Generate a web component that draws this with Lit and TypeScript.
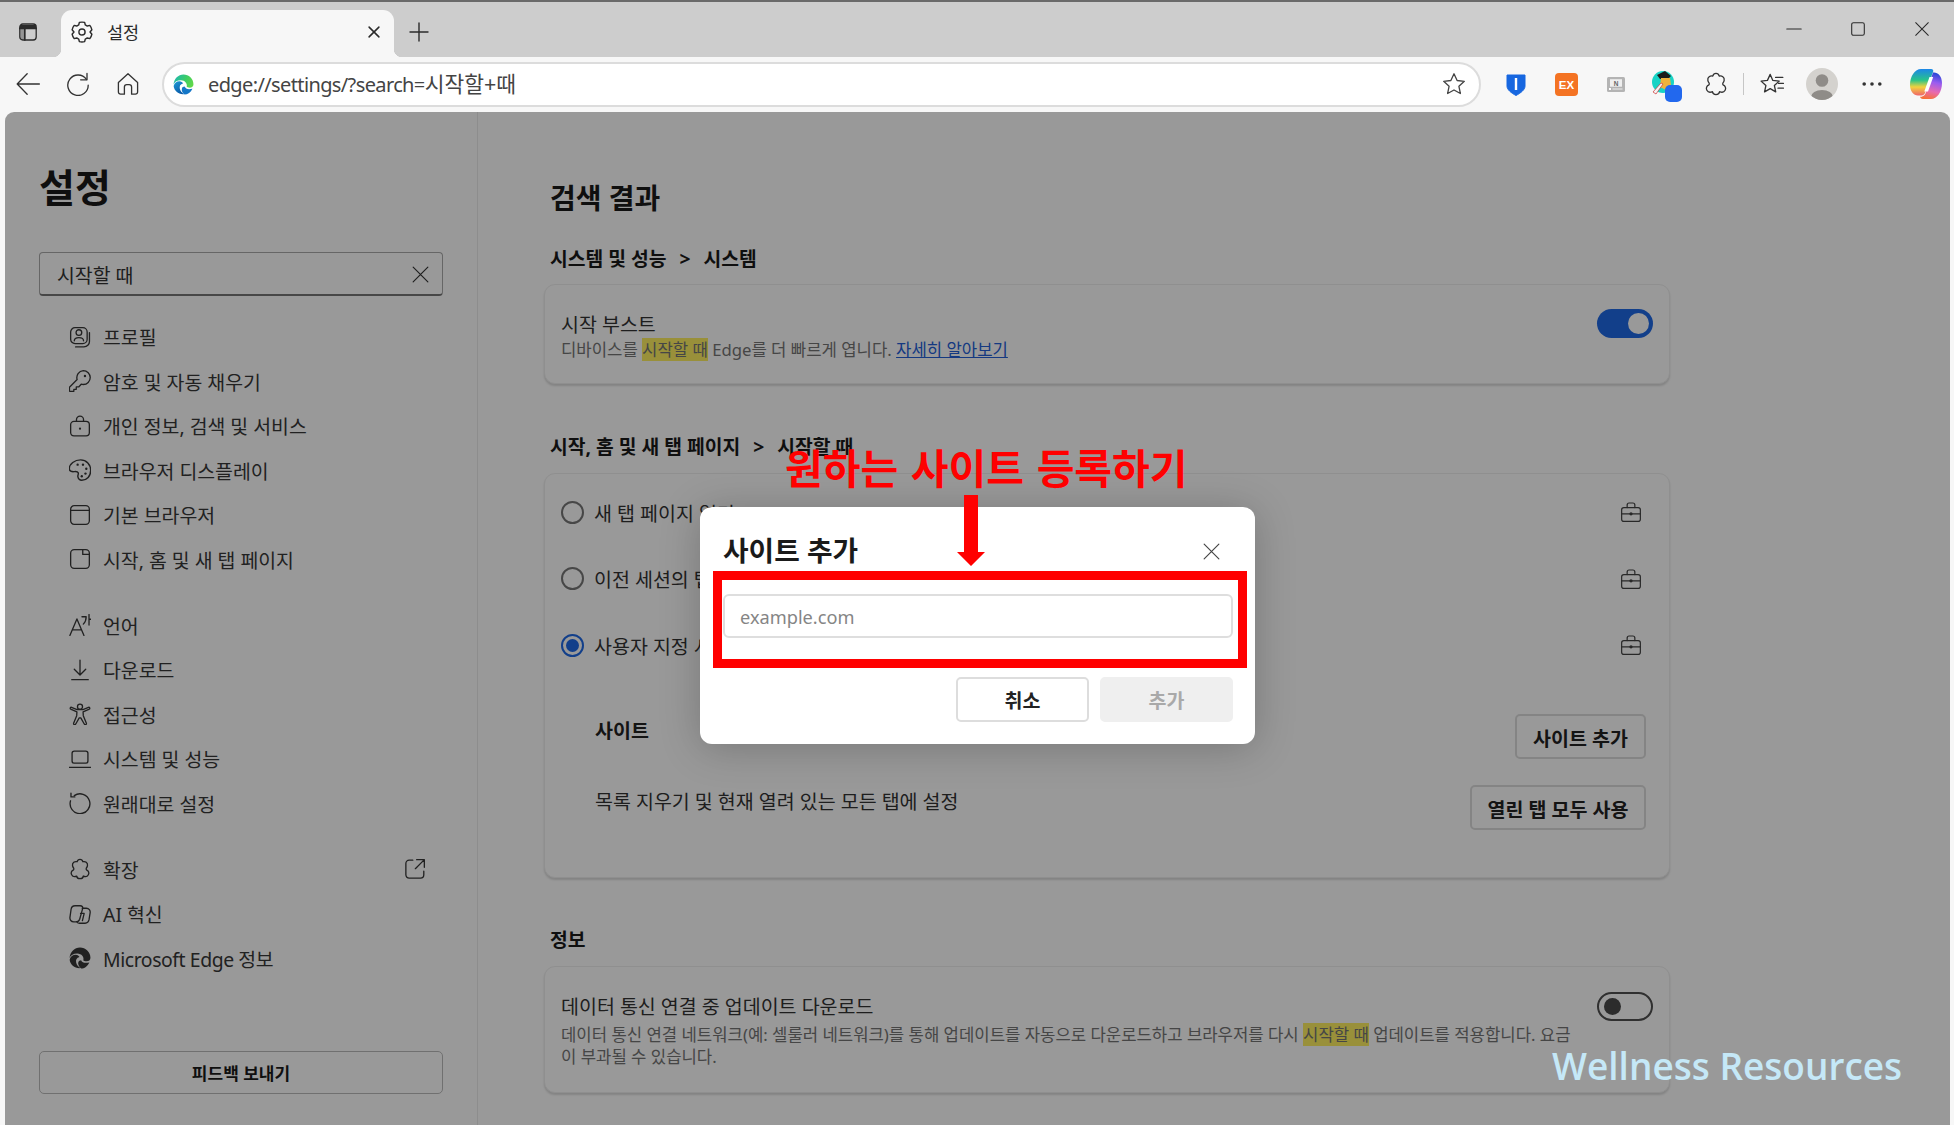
import { LitElement, html, svg, css } from 'lit'
import { customElement } from 'lit/decorators.js'

const EDGE_TOP = 'M.5 10C1 4.500 5 .5 10 .5s9.500 4 9.500 9.200c0 2-1.500 3.300-3.500 3.300-1.500 0-2.700-.5-3-1 1-2.500-1.500-6-5.500-6C4 6 1.500 7.500.5 10z'
const EDGE_LEFT = 'M.6 11.500c.6-3 3-4.500 5.500-4.500 1.700 0 3 1 3.400 2-2.500.5-3.500 2.500-3 5 .4 2 2 4 4 5.200C5.500 19.800 1 16 .6 11.500z'
const EDGE_RIGHT = 'M11 12c1 2.200 3.500 3 7.500 2-1.500 3.500-4.500 5.500-7.500 5.500-1.700-1.300-3.200-3.500-2.500-5.800.3-.9 1.300-1.700 2.500-1.700z'
const PUZZLE = 'M7.300 3.400C7.700 2 8.700 1.200 10 1.200s2.300.8 2.700 2.200c2-.6 4.600.8 4.100 3.600-.1.8-.5 1.600-1.100 2.300-.2.6-.1 1.100.2 1.500 1.900.8 2.700 2.600 1.700 4.400-.9 1.600-2.900 2-4.600 1.200-.2 1.500-1.500 2.400-3 2.400s-2.800-.9-3-2.400c-1.700.8-3.700.4-4.600-1.200-1-1.800-.2-3.600 1.700-4.400.3-.4.4-.9.200-1.500-.6-.7-1-1.500-1.100-2.300-.5-2.800 2.100-4.200 4.100-3.600z'

const ICONS: Record<string, unknown> = {
  profile: svg`<rect x="1.500" y="1.500" width="15" height="14.500" rx="4"/><circle cx="9" cy="6" r="2.600"/><path d="M4.800 13.500c0-2.200 1.800-3 4.200-3s4.200.8 4.200 3"/><path d="M18.600 6v8a5 5 0 0 1-5 5H6"/>`,
  key: svg`<path d="M13 .6a6.300 6.300 0 0 1 0 12.600c-.7 0-1.300-.1-1.900-.3L8.800 15.400H6.600v2.200H4.400v1.800H1.200a.8.8 0 0 1-.8-.8v-2.900l7-7A6.300 6.300 0 0 1 13 .6z"/><circle cx="14.500" cy="5.400" r="1.100" fill="currentColor" stroke="none"/>`,
  lock: svg`<rect x="1.500" y="5.800" width="17" height="13.200" rx="3"/><path d="M6.800 5.800V4.200a3.200 3.200 0 0 1 6.400 0v1.600"/><circle cx="10" cy="12.400" r="1" fill="currentColor" stroke="none"/>`,
  palette: svg`<g transform="translate(10 10) scale(1.080) translate(-10 -10)"><path d="M10.500 1.500C5.500 1.500 1 5 1 8.800c0 2.200 2 2.700 3.700 2.600 1.700-.1 3.300-.4 3.800 1 .4 1.200-.5 2-.3 3.200.3 1.900 1.500 3 3.300 3 4.300 0 7.500-3.500 7.500-8.300s-3.500-8.800-8.500-8.800z"/><g fill="currentColor" stroke="none"><circle cx="8" cy="5.500" r="1"/><circle cx="12.500" cy="5.500" r="1"/><circle cx="15.300" cy="9" r="1"/><circle cx="14.600" cy="13" r="1"/><circle cx="11.500" cy="15.300" r="1"/></g></g>`,
  browser: svg`<rect x="1.500" y="1.500" width="17" height="17" rx="3.200"/><path d="M1.500 5.800h17"/>`,
  startpage: svg`<path d="M4.700 1.500h7.800v4.300h6v9.500a3.200 3.200 0 0 1-3.200 3.200H4.700a3.200 3.200 0 0 1-3.200-3.200V4.700a3.200 3.200 0 0 1 3.200-3.200z"/><path d="M12.500 1.500h2.800a3.200 3.200 0 0 1 3.200 3.200v1.100"/>`,
  language: svg`<path d="M.8 19.500L7.200 4.500l6.400 15M3 14.500h8.500"/><path d="M11.800 2.500h3.800c0 2.800-.8 5-2.600 6.700M18.200.5v9.500M18.200 4.800h1.600"/>`,
  download: svg`<path d="M10 1v13.500M4.800 9.300l5.200 5.200 5.200-5.200M2.500 18.800h15"/>`,
  access: svg`<circle cx="10" cy="3.400" r="2.300"/><path d="M1.500 5.500l5.700 2.600-.2 3.400-2.800 7c-.3 1 1.200 1.700 1.800.8l3.300-5.800h1.400l3.300 5.800c.6.9 2.100.2 1.800-.8L13 11.500l-.2-3.400 5.700-2.600c.8-.5.200-2-.8-1.600l-5 2.100H7.300l-5-2.100c-1-.4-1.600 1.100-.8 1.600z"/>`,
  laptop: svg`<rect x="2.800" y="2.800" width="14.400" height="11" rx="2"/><path d="M0 17.600h20"/>`,
  reset: svg`<path d="M4.800 3.300A9 9 0 1 1 1.400 8"/><path d="M1.800 1v3.500h3.500"/>`,
  puzzle: svg`<path d=${PUZZLE}/>`,
  ai: svg`<path d="M5.500 2.500h4.700c1.600 0 2.600 1 2.200 2.600L9.700 14.800c-.5 1.500-1.500 2.300-3 2.300H4.300c-2.300 0-3.800-1.700-3.400-4.200l1-7.200c.3-2 1.700-3.200 3.600-3.200z"/><path d="M12 4.800h3.800c2.300 0 3.800 1.800 3.400 4.200l-1 6.200c-.4 2-1.700 3.200-3.600 3.200H9.500c-1.300 0-2.200-.6-2.500-1.500"/><path d="M10.500 9.500h3.300l-1.600 6.500"/>`,
  edge: svg`<g fill="currentColor" stroke="none"><path d=${EDGE_TOP}/><path d=${EDGE_LEFT}/><path d=${EDGE_RIGHT}/></g>`,
  external: svg`<path d="M8 2H4.700a3 3 0 0 0-3 3v10.300a3 3 0 0 0 3 3H15a3 3 0 0 0 3-3V12"/><path d="M11.500 1.500h7v7M18.300 1.700l-8 8"/>`,
  briefcase: svg`<rect x="1.500" y="6" width="17" height="12.500" rx="2"/><path d="M6.500 6V3.600c0-1 .8-1.800 1.800-1.800h3.400c1 0 1.800.8 1.800 1.800V6M1.500 11.700h17"/><circle cx="10" cy="11.700" r="1.500" fill="currentColor" stroke="none"/>`,
  gear: svg`<path d="M10 1c.9 0 1.700.1 2.400.3l.6 2.300 1.800 1 2.300-.6c1 1.200 1.600 2.500 1.900 4L17.300 10l1.700 2c-.3 1.500-.9 2.800-1.900 4l-2.300-.6-1.800 1-.6 2.300c-1.600.5-3.200.5-4.800 0L7 16.400l-1.800-1-2.300.6C1.900 14.800 1.300 13.500 1 12l1.700-2L1 8c.3-1.500.9-2.800 1.900-4l2.300.6 1.800-1 .6-2.300C8.300 1.100 9.100 1 10 1z"/><circle cx="10" cy="10" r="2.800"/>`,
  sidetab: svg`<rect x="1.800" y="2" width="16.400" height="16" rx="3"/><path d="M1.800 6.400h16.400M6.800 6.400V18" stroke-width="1.700"/><path d="M2 3h16v3.400H2z" fill="currentColor" stroke="none"/><path d="M2.500 7h4v10.500h-4z" fill="currentColor" stroke="none" opacity=".35"/>`,
  close: svg`<path d="M3 3l14 14M17 3L3 17"/>`,
  plus: svg`<path d="M10 1v18M1 10h18"/>`,
  back: svg`<path d="M19.500 10H1M9.300 1.500L1 10l8.300 8.500"/>`,
  refresh: svg`<path d="M17 6.200A8.500 8.500 0 1 0 18.500 11"/><path d="M17.500 1.200v5.300h-5.300"/>`,
  home: svg`<path d="M10 1.500l8 7.200v8a1.800 1.800 0 0 1-1.800 1.800h-3.200v-6a2 2 0 0 0-2-2h-2a2 2 0 0 0-2 2v6H3.800A1.800 1.800 0 0 1 2 16.700v-8z"/>`,
  star: svg`<path d="M10 1.500l2.600 5.600 6 .7-4.500 4.100 1.200 6L10 15l-5.300 2.900 1.200-6L1.400 7.800l6-.7z"/>`,
  favs: svg`<path d="M8.500 2l2.200 5 5.300.6-4 3.700 1.100 5.300-4.600-2.700-4.700 2.700 1.100-5.300-4-3.700 5.300-.6z"/><path d="M13 4.500h6M15.500 9.500h4M15 13.500h4.500"/>`,
  more: svg`<g fill="currentColor" stroke="none"><circle cx="3.500" cy="10" r="1.500"/><circle cx="10" cy="10" r="1.500"/><circle cx="16.500" cy="10" r="1.500"/></g>`,
  min: svg`<path d="M2 10h16"/>`,
  max: svg`<rect x="3" y="3" width="14" height="14" rx="2"/>`
}

const icon = (name: string, cls = '') =>
  html`<svg class="ico ${cls}" viewBox="0 0 20 20" fill="none" stroke="currentColor" stroke-linecap="round" stroke-linejoin="round">${ICONS[name]}</svg>`

const NAV = [
  [
    ['profile', '프로필'],
    ['key', '암호 및 자동 채우기'],
    ['lock', '개인 정보, 검색 및 서비스'],
    ['palette', '브라우저 디스플레이'],
    ['browser', '기본 브라우저'],
    ['startpage', '시작, 홈 및 새 탭 페이지']
  ],
  [
    ['language', '언어'],
    ['download', '다운로드'],
    ['access', '접근성'],
    ['laptop', '시스템 및 성능'],
    ['reset', '원래대로 설정']
  ],
  [
    ['puzzle', '확장'],
    ['ai', 'AI 혁신'],
    ['edge', 'Microsoft Edge 정보']
  ]
]

@customElement('app-root')
export class AppRoot extends LitElement {
  static styles = css`
    :host {
      display: block;
      width: 1954px;
      height: 1125px;
      overflow: hidden;
      position: relative;
      background: #f7f7f7;
      font-family: "Noto Sans", "Noto Sans CJK KR", sans-serif;
      color: #1a1a1a;
    }
    * { box-sizing: border-box; }
    .ico { width: 20px; height: 20px; stroke-width: 1.300; display: block; flex: none; }

    /* window chrome */
    .tabstrip {
      height: 57px;
      background: #cdcdcd;
      border-top: 2px solid #6a6a6a;
      display: flex;
      align-items: flex-end;
      color: #2b2b2b;
    }
    .side-btn { width: 61px; height: 47px; display: flex; align-items: center; justify-content: center; padding: 0 5px 4px 0; }
    .tab {
      width: 333px;
      height: 47px;
      background: #f7f7f7;
      border-radius: 11px 11px 0 0;
      display: flex;
      align-items: center;
      padding: 0 13px 3px 10px;
      font-size: 17.500px;
      position: relative;
    }
    .tab::before, .tab::after {
      content: '';
      position: absolute;
      bottom: 0;
      width: 8px;
      height: 8px;
    }
    .tab::before { left: -8px; background: radial-gradient(circle at 0 0, transparent 8px, #f7f7f7 8.500px); }
    .tab::after { right: -8px; background: radial-gradient(circle at 100% 0, transparent 8px, #f7f7f7 8.500px); }
    .tab .gear { width: 22px; height: 22px; margin-right: 14px; }
    .tab span { padding-bottom: 2px; }
    .tab .x { width: 14px; height: 14px; margin-left: auto; stroke-width: 2.200; }
    .new-tab { width: 50px; height: 47px; display: flex; align-items: center; justify-content: center; padding-bottom: 4px; }
    .new-tab .ico { width: 20px; height: 20px; stroke-width: 1.400; }
    .win { margin-left: auto; display: flex; height: 55px; }
    .win div { width: 64px; display: flex; align-items: center; justify-content: center; padding-bottom: 2px; }
    .win .ico { width: 18px; height: 18px; stroke-width: 1.200; }

    .toolbar { height: 55px; display: flex; align-items: center; padding: 0 0 1px 3px; color: #333; }
    .tb { width: 50px; height: 44px; flex: none; display: flex; align-items: center; justify-content: center; }
    .tb .ico { width: 24px; height: 24px; stroke-width: 1.100; }
    .address {
      flex: 1;
      height: 45px;
      margin-left: 9px;
      margin-right: 10px;
      background: #fff;
      border: 2px solid #dcdcdc;
      border-radius: 23px;
      display: flex;
      align-items: center;
      padding: 0 13px 0 9px;
      font-size: 20px;
      color: #444;
    }
    .address .logo { width: 21px; height: 21px; margin-right: 14px; flex: none; }
    .address .url { letter-spacing: -.62px; padding-bottom: 3px; }
    .address .url b { font-weight: 400; font-size: 21.500px; letter-spacing: 0; }
    .address .star { margin-left: auto; width: 24px; height: 24px; stroke-width: 1.100; }
    .divider { width: 1px; height: 22px; background: #c6c6c6; margin: 0 3px 0 2px; flex: none; }
    .copilot { width: 57px; }
    .tb svg.plain { display: block; }

    /* settings page */
    .panel {
      margin-left: 5px;
      margin-right: 4px;
      height: 1013px;
      border-radius: 9px 9px 0 0;
      background: #fff;
      position: relative;
      overflow: hidden;
      display: grid;
      grid-template-columns: 473px 1fr;
    }
    .sidebar {
      border-right: 1px solid #ececec;
      padding: 53px 34px 31px 34px;
      display: flex;
      flex-direction: column;
    }
    .sidebar h1 { margin: 0; font-size: 39px; line-height: 44px; font-weight: 700; }
    .search {
      margin-top: 43px;
      height: 44px;
      flex: none;
      border: 1px solid #aaa;
      border-bottom: 2px solid #777;
      border-radius: 4px;
      display: flex;
      align-items: center;
      padding: 1px 11px 0 17px;
      font-size: 19.400px;
      color: #333;
    }
    .search .ico { margin-left: auto; width: 21px; height: 21px; stroke-width: 1.100; }
    .group { margin-top: 21.500px; }
    .group.first { margin-top: 18.700px; }
    .row {
      height: 44.500px;
      display: flex;
      align-items: center;
      gap: 13px;
      padding: 0 18px 0 31px;
      font-size: 19.400px;
      color: #383838;
    }
    .row .ico { width: 22px; height: 22px; margin: 0 -1px; stroke-width: 1.200; }
    .row .ext { margin-left: auto; }
    .row .latin { letter-spacing: -.42px; }
    .feedback {
      margin-top: auto;
      height: 43px;
      border: 1px solid #bbb;
      border-radius: 5px;
      display: flex;
      align-items: center;
      justify-content: center;
      font-size: 17px;
      font-weight: 700;
    }

    .main { padding: 68px 280px 0 66px; }
    .main h2 { margin: 0 0 0 6px; font-size: 28px; line-height: 36px; font-weight: 700; }
    .crumb { margin: 31px 0 13px 6px; font-size: 19.300px; line-height: 24px; font-weight: 700; display: flex; gap: 13px; }
    .crumb.next { margin-top: 51px; margin-bottom: 14px; }
    .crumb.info { margin-top: 50px; margin-bottom: 14px; }
    .card {
      border: 1px solid #efefef;
      border-radius: 11px;
      box-shadow: 0 2px 2px rgba(0,0,0,.14);
      background: #fff;
    }
    .boost { height: 100px; padding: 24px 16px 0 16px; display: flex; justify-content: space-between; align-items: flex-start; }
    .setting-title { font-size: 19.500px; line-height: 24px; color: #333; }
    .boost .setting-title { margin-top: 4px; }
    .desc { font-size: 16.700px; line-height: 22px; color: #757575; margin-top: 2px; }
    .data .desc { margin-top: 5px; }
    mark { background: #fff161; color: inherit; }
    a { color: #2460d8; text-decoration: underline; }
    .switch { width: 56px; height: 29px; border-radius: 15px; display: flex; align-items: center; flex: none; }
    .switch.on { background: #1f69e6; justify-content: flex-end; padding-right: 4px; }
    .switch.on i { width: 21px; height: 21px; border-radius: 50%; background: #fff; }
    .switch.off { border: 2px solid #505050; padding-left: 5px; }
    .switch.off i { width: 17px; height: 17px; border-radius: 50%; background: #4a4a4a; }

    .startup { height: 405px; padding: 5px 23px 0 16px; }
    .radio-row { height: 66.500px; display: flex; align-items: center; gap: 10px; font-size: 19.500px; color: #333; padding-right: 5px; }
    .radio { width: 23px; height: 23px; border-radius: 50%; border: 2px solid #777; flex: none; }
    .radio.sel { border-color: #1f69e6; display: flex; align-items: center; justify-content: center; }
    .radio.sel::after { content: ''; width: 13px; height: 13px; border-radius: 50%; background: #1f69e6; }
    .radio-row .ico { margin: 0 -1px 0 auto; width: 22px; height: 22px; stroke-width: 1.100; color: #444; }
    .sub { display: flex; justify-content: space-between; align-items: center; padding-left: 34px; font-size: 19.500px; color: #333; }
    .sub.sites { margin-top: 35.500px; }
    .sub.clear { margin-top: 26px; }
    .sub span { padding-bottom: 14px; }
    .sub b { padding-bottom: 14px; color: #222; }
    .btn {
      height: 45px;
      border: 2px solid #ddd;
      border-radius: 5px;
      background: #fff;
      display: flex;
      align-items: center;
      justify-content: center;
      padding-top: 1px;
      font-size: 19.500px;
      font-weight: 700;
      color: #222;
    }
    .btn.add-site { width: 131px; }
    .btn.use-tabs { width: 176px; }

    .data { height: 127px; padding: 25px 16px 0 16px; display: flex; justify-content: space-between; align-items: flex-start; }
    .data .setting-title { margin-top: 3px; }

    /* dialog on top of the dimmed page */
    .scrim {
      position: absolute;
      inset: 0;
      background: rgba(0,0,0,.4);
      display: flex;
      align-items: center;
      justify-content: center;
      padding-top: 13px;
    }
    .dialog {
      width: 555px;
      height: 237px;
      background: #fff;
      border-radius: 12px;
      box-shadow: 0 4px 40px rgba(0,0,0,.22);
      padding: 25px 22px 22px 23px;
      position: relative;
    }
    .dialog-head { display: flex; justify-content: space-between; align-items: center; height: 36px; }
    .dialog-head h3 { margin: 0; font-size: 27.800px; line-height: 36px; font-weight: 700; }
    .dialog-head .ico { width: 21px; height: 21px; margin-right: 11px; margin-top: 4px; stroke-width: 1.100; color: #444; }
    .input {
      margin-top: 26px;
      height: 44px;
      border: 2px solid #dedede;
      border-radius: 6px;
      display: flex;
      align-items: center;
      padding: 2px 0 0 15px;
      font-size: 18.200px;
      color: #858585;
    }
    .actions { margin-top: 39px; display: flex; justify-content: flex-end; gap: 11px; }
    .actions .btn { width: 133px; }
    .actions .btn.disabled { background: #efefef; border-color: #efefef; color: #a9a9a9; }

    .callout-text {
      position: absolute;
      left: 85px;
      top: -62px;
      width: 400px;
      white-space: nowrap;
      text-align: center;
      font-size: 41px;
      line-height: 46px;
      font-weight: 700;
      color: #f00;
      word-spacing: 2px;
    }
    .callout-arrow { position: absolute; left: 257px; top: -12px; width: 28px; height: 71px; display: block; }
    .callout-box { position: absolute; left: 13px; top: 64px; width: 534px; height: 97px; border: 9px solid #f00; }
    .watermark {
      position: absolute;
      left: 1552px;
      top: 1040px;
      font-family: "Open Sans", sans-serif;
      font-size: 37px;
      line-height: 52px;
      font-weight: 600;
      color: #c5e8f7;
      white-space: nowrap;
    }
  `

  render () {
    return html`
      <div class="tabstrip">
        <div class="side-btn">${icon('sidetab')}</div>
        <div class="tab">
          ${icon('gear', 'gear')}
          <span>설정</span>
          ${icon('close', 'x')}
        </div>
        <div class="new-tab">${icon('plus')}</div>
        <div class="win">
          <div>${icon('min')}</div>
          <div>${icon('max')}</div>
          <div>${icon('close')}</div>
        </div>
      </div>
      <div class="toolbar">
        <div class="tb">${icon('back')}</div>
        <div class="tb">${icon('refresh')}</div>
        <div class="tb">${icon('home')}</div>
        <div class="address">
          ${this.edgeLogo()}
          <span class="url">edge://settings/?search=<b>시작할+때</b></span>
          ${icon('star', 'star')}
        </div>
        <div class="tb">${this.shield()}</div>
        <div class="tb">${this.exBadge()}</div>
        <div class="tb">${this.newsIcon()}</div>
        <div class="tb">${this.profileExt()}</div>
        <div class="tb">${icon('puzzle')}</div>
        <div class="divider"></div>
        <div class="tb">${icon('favs')}</div>
        <div class="tb">${this.avatar()}</div>
        <div class="tb">${icon('more')}</div>
        <div class="tb copilot">${this.copilot()}</div>
      </div>

      <div class="panel">
        <aside class="sidebar">
          <h1>설정</h1>
          <div class="search"><span>시작할 때</span>${icon('close')}</div>
          ${NAV.map((group, i) => html`
            <div class="group ${i === 0 ? 'first' : ''}">
              ${group.map(([ic, label]) => html`
                <div class="row">
                  ${icon(ic)}
                  <span class=${label.startsWith('Microsoft') ? 'latin' : ''}>${label}</span>
                  ${label === '확장' ? icon('external', 'ext') : ''}
                </div>
              `)}
            </div>
          `)}
          <div class="feedback">피드백 보내기</div>
        </aside>

        <section class="main">
          <h2>검색 결과</h2>
          <div class="crumb"><span>시스템 및 성능</span><span>&gt;</span><span>시스템</span></div>
          <div class="card boost">
            <div>
              <div class="setting-title">시작 부스트</div>
              <div class="desc">디바이스를 <mark>시작할 때</mark> Edge를 더 빠르게 엽니다. <a>자세히 알아보기</a></div>
            </div>
            <div class="switch on"><i></i></div>
          </div>

          <div class="crumb next"><span>시작, 홈 및 새 탭 페이지</span><span>&gt;</span><span>시작할 때</span></div>
          <div class="card startup">
            <div class="radio-row"><div class="radio"></div><span>새 탭 페이지 열기</span>${icon('briefcase')}</div>
            <div class="radio-row"><div class="radio"></div><span>이전 세션의 탭 열기</span>${icon('briefcase')}</div>
            <div class="radio-row"><div class="radio sel"></div><span>사용자 지정 시작 페이지 열기</span>${icon('briefcase')}</div>
            <div class="sub sites"><b>사이트</b><div class="btn add-site">사이트 추가</div></div>
            <div class="sub clear"><span>목록 지우기 및 현재 열려 있는 모든 탭에 설정</span><div class="btn use-tabs">열린 탭 모두 사용</div></div>
          </div>

          <div class="crumb info"><span>정보</span></div>
          <div class="card data">
            <div>
              <div class="setting-title">데이터 통신 연결 중 업데이트 다운로드</div>
              <div class="desc">데이터 통신 연결 네트워크(예: 셀룰러 네트워크)를 통해 업데이트를 자동으로 다운로드하고 브라우저를 다시 <mark>시작할 때</mark> 업데이트를 적용합니다. 요금<br>이 부과될 수 있습니다.</div>
            </div>
            <div class="switch off"><i></i></div>
          </div>
        </section>

        <div class="scrim">
          <div class="dialog">
            <div class="dialog-head"><h3>사이트 추가</h3>${icon('close')}</div>
            <div class="input">example.com</div>
            <div class="actions">
              <div class="btn">취소</div>
              <div class="btn disabled">추가</div>
            </div>
            <div class="callout-text">원하는 사이트 등록하기</div>
            <svg class="callout-arrow" viewBox="0 0 28 71"><path d="M7 0h14v57h7L14 71 0 57h7z" fill="#f00"/></svg>
            <div class="callout-box"></div>
          </div>
        </div>
      </div>
      <div class="watermark">Wellness Resources</div>
    `
  }

  edgeLogo () {
    return html`<svg class="logo" viewBox="0 0 20 20">
      <defs>
        <linearGradient id="eg" x1="0" y1=".3" x2="1" y2=".6"><stop offset="0" stop-color="#1fb8b0"/><stop offset=".6" stop-color="#3fce62"/><stop offset="1" stop-color="#62d84a"/></linearGradient>
        <linearGradient id="eb" x1="0" y1="0" x2=".6" y2="1"><stop offset="0" stop-color="#1c9ad6"/><stop offset="1" stop-color="#0a5aa8"/></linearGradient>
      </defs>
      <path d=${EDGE_TOP} fill="url(#eg)"/>
      <path d=${EDGE_LEFT} fill="url(#eb)"/>
      <path d=${EDGE_RIGHT} fill="#1477c8"/>
    </svg>`
  }

  shield () {
    return html`<svg class="plain" width="20" height="24" viewBox="0 0 20 24">
      <path d="M1 3h18v11c0 4-4.500 7-9 9.500C5.500 21 1 18 1 14z" fill="#1767e0" stroke="#1767e0" stroke-linejoin="round" stroke-width="1"/>
      <rect x="8.800" y="6" width="2.400" height="12" fill="#fff"/>
    </svg>`
  }

  exBadge () {
    return html`<svg class="plain" width="23" height="23" viewBox="0 0 23 23">
      <rect width="23" height="23" rx="4" fill="#f47323"/>
      <text x="11.500" y="16" text-anchor="middle" font-family="Liberation Sans, sans-serif" font-size="11.500" font-weight="700" fill="#fff">EX</text>
    </svg>`
  }

  newsIcon () {
    return html`<svg class="plain" width="18" height="15" viewBox="0 0 18 15">
      <rect width="18" height="15" rx="1.500" fill="#b4b4b4"/>
      <rect x="3" y="2.200" width="12" height="7.500" fill="#efefef"/>
      <text x="9" y="8.600" text-anchor="middle" font-family="Liberation Sans, sans-serif" font-size="6.500" font-weight="700" fill="#666">N</text>
      <rect x="2" y="11" width="2" height="2" fill="#fff"/>
      <rect x="5.500" y="11.500" width="10" height="1" fill="#eee"/>
    </svg>`
  }

  profileExt () {
    return html`<svg class="plain" width="30" height="34" viewBox="0 0 30 34" style="margin-left:2px;margin-top:6px">
      <circle cx="11" cy="12" r="11" fill="#18d3c5"/>
      <path d="M5 5l8-4 6 5-3 3H8z" fill="#1b1b1b"/>
      <path d="M9 8h9l1 7-5 5-6-3z" fill="#eeb23c"/>
      <path d="M1 22l8-9 2 1-7 10z" fill="#f3f3f3" stroke="#c33" stroke-width=".7"/>
      <rect x="13" y="15" width="17" height="17" rx="5" fill="#2268ee"/>
    </svg>`
  }

  avatar () {
    return html`<svg class="plain" width="32" height="32" viewBox="0 0 32 32">
      <defs><clipPath id="av"><circle cx="16" cy="16" r="16"/></clipPath></defs>
      <circle cx="16" cy="16" r="16" fill="#d4d2ce"/>
      <g clip-path="url(#av)" fill="#8f8c88">
        <circle cx="16" cy="12.500" r="6.300"/>
        <ellipse cx="16" cy="29" rx="11" ry="7"/>
      </g>
    </svg>`
  }

  copilot () {
    return html`<svg class="plain" width="32" height="32" viewBox="0 0 32 32">
      <defs>
        <linearGradient id="c1" x1=".4" y1="0" x2=".4" y2="1"><stop offset="0" stop-color="#1c86e8"/><stop offset=".42" stop-color="#28c48a"/><stop offset=".68" stop-color="#f2d23e"/><stop offset="1" stop-color="#f0656a"/></linearGradient>
        <linearGradient id="c2" x1=".6" y1="0" x2=".4" y2="1"><stop offset="0" stop-color="#2547d6"/><stop offset=".35" stop-color="#9a5cf0"/><stop offset=".7" stop-color="#e86ab0"/><stop offset="1" stop-color="#f6713a"/></linearGradient>
      </defs>
      <path d="M11 1h10c1.800 0 2.600 1 2.200 2.500L15 25c-.6 1.600-1.800 2.500-3.500 2.500H8C3.500 27.500 0 23 0 17 0 8 5 1 11 1z" fill="url(#c1)"/>
      <path d="M23 4.500h1c4 0 8 4 8 10.500 0 9-5 16-11 16h-8c-1.800 0-2.800-1-3-2.200 2 0 4.800-.8 5.500-3.300z" fill="url(#c2)"/>
      <path d="M19.500 9h3.700L18 23.500h-3.700z" fill="#fff"/>
    </svg>`
  }
}
